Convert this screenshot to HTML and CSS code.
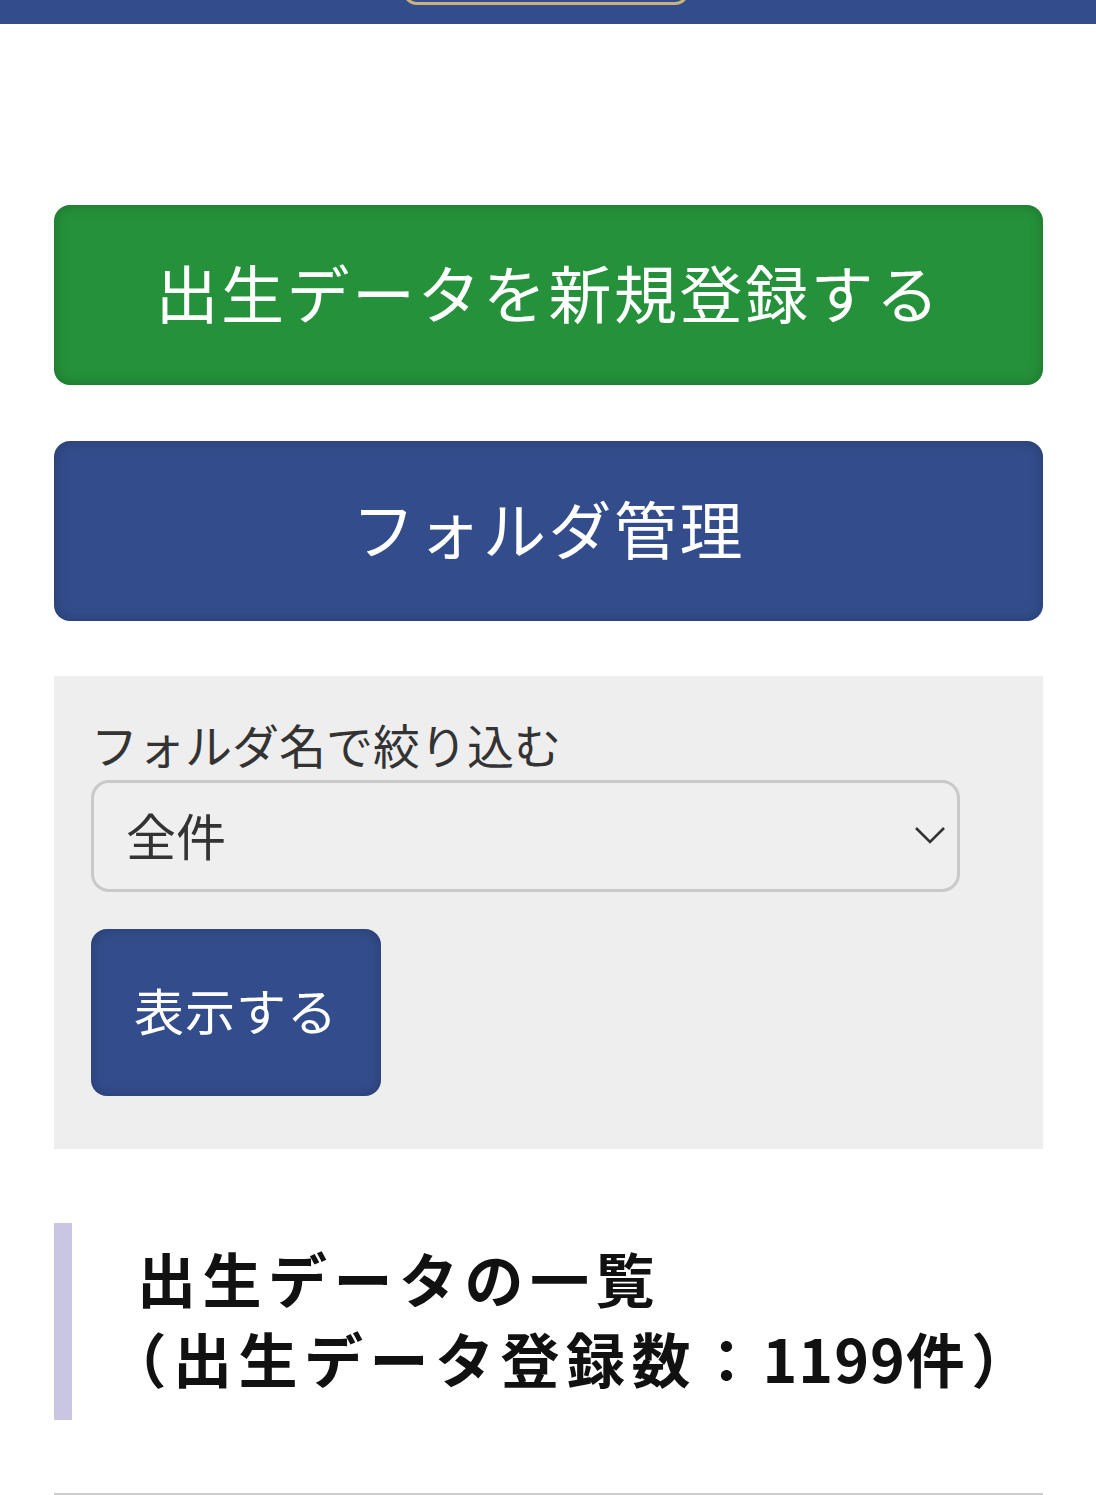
FILE: index.html
```html
<!DOCTYPE html>
<html lang="ja">
<head>
<meta charset="utf-8">
<title>出生データ</title>
<link rel="stylesheet" href="styles.css">
</head>
<body>
<header class="site-header">
  <div class="logo-pill"></div>
</header>
<main class="content">
  <a class="big-btn btn-green" href="#">出生データを新規登録する</a>
  <a class="big-btn btn-blue" href="#">フォルダ管理</a>
  <form class="filter-panel">
    <label class="filter-label" for="folder">フォルダ名で絞り込む</label>
    <div class="select-wrap">
      <select id="folder" class="filter-select">
        <option>全件</option>
      </select>
      <svg class="select-chevron" width="32" height="20" viewBox="0 0 32 20" aria-hidden="true">
        <path d="M2 3 L16 17 L30 3" fill="none" stroke="#333" stroke-width="2.6"/>
      </svg>
    </div>
    <button type="button" class="show-btn">表示する</button>
  </form>
  <h2 class="list-heading">出生データの一覧<br>（出生データ登録数：<span class="count">1199</span>件）</h2>
  <div class="divider"></div>
</main>
</body>
</html>
```
FILE: styles.css
```css
html, body {
  margin: 0;
  padding: 0;
  background: #ffffff;
  font-family: "Noto Sans CJK JP", "Noto Sans", sans-serif;
}

.site-header {
  height: 24px;
  background: #334d8c;
  overflow: hidden;
  display: flex;
  justify-content: center;
}

.logo-pill {
  width: 286px;
  height: 40px;
  margin-top: -35px;
  margin-left: -4px;
  border: 3px solid #c9b37c;
  border-radius: 14px;
  box-sizing: border-box;
}

.content {
  padding: 181px 53px 0 54px;
  display: flex;
  flex-direction: column;
}

.big-btn {
  display: flex;
  align-items: center;
  justify-content: center;
  height: 180px;
  box-sizing: border-box;
  padding-bottom: 9px;
  border-radius: 16px;
  color: #ffffff;
  text-decoration: none;
  font-size: 63px;
  letter-spacing: 2.5px;
  box-shadow: inset 0 0 14px rgba(0, 0, 0, 0.22);
}

.btn-green {
  background: #25913a;
  margin-bottom: 56px;
}

.btn-blue {
  background: #334d8c;
  margin-bottom: 55px;
}

.filter-panel {
  background: #eeeeee;
  padding: 40px 37px 53px 37px;
  display: flex;
  flex-direction: column;
  align-items: flex-start;
  margin: 0;
}

.filter-label {
  font-size: 47px;
  line-height: 64px;
  padding-bottom: 4px;
  margin-top: -4px;
  color: #333333;
}

.select-wrap {
  position: relative;
  width: 869px;
  margin-bottom: 37px;
}

.filter-select {
  appearance: none;
  -webkit-appearance: none;
  display: block;
  width: 100%;
  height: 112px;
  box-sizing: border-box;
  border: 3px solid #c9c9c9;
  border-radius: 18px;
  background: #efefef;
  color: #333333;
  font-family: "Noto Sans CJK JP", "Noto Sans", sans-serif;
  font-size: 50px;
  padding: 0 0 4px 32px;
  margin: 0;
}

.select-chevron {
  position: absolute;
  right: 14px;
  top: 45px;
  pointer-events: none;
}

.show-btn {
  width: 290px;
  height: 167px;
  border: none;
  border-radius: 16px;
  background: #334d8c;
  color: #ffffff;
  font-family: "Noto Sans CJK JP", "Noto Sans", sans-serif;
  font-size: 50px;
  letter-spacing: 1px;
  padding: 0 0 8px 0;
  box-shadow: inset 0 0 14px rgba(0, 0, 0, 0.22);
}

.list-heading {
  margin: 74px 0 0 0;
  border-left: 18px solid #c8c6e0;
  padding: 15px 0 22px 65px;
  font-size: 59px;
  line-height: 80px;
  font-weight: 700;
  color: #111111;
  letter-spacing: 6.5px;
  white-space: nowrap;
  text-spacing-trim: trim-start;
}

.count {
  letter-spacing: 1px;
}

.divider {
  margin-top: 73px;
  border-top: 2px solid #cccccc;
}
```
